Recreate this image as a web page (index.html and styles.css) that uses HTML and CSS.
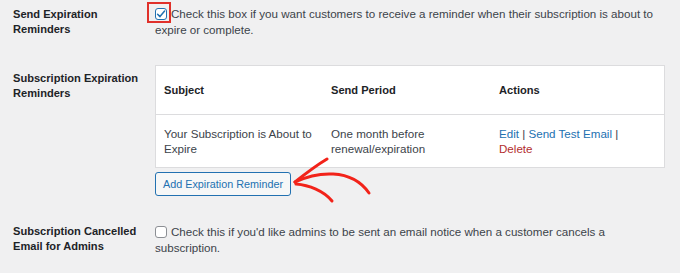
FILE: index.html
```html
<!DOCTYPE html>
<html>
<head>
<meta charset="utf-8">
<link rel="stylesheet" href="styles.css">
</head>
<body>
<div class="form">
  <div class="row row-first">
    <div class="label">Send Expiration Reminders</div>
    <div class="field">
      <label class="check-line">
        <span class="highlight"><span class="cb checked"><svg viewBox="0 0 12 12" width="12" height="12"><path d="M2.6 6.2 L5 8.6 L9.6 3" fill="none" stroke="#2271b1" stroke-width="1.5" stroke-linecap="round" stroke-linejoin="round"/></svg></span></span><span class="after-cb">Check this box if you want customers to receive a reminder when their subscription is about to expire or complete.</span>
      </label>
    </div>
  </div>
  <div class="row row-second">
    <div class="label">Subscription Expiration Reminders</div>
    <div class="field">
      <table class="reminders">
        <thead>
          <tr><th class="c1">Subject</th><th class="c2">Send Period</th><th class="c3">Actions</th></tr>
        </thead>
        <tbody>
          <tr>
            <td class="c1">Your Subscription is About to Expire</td>
            <td class="c2">One month before renewal/expiration</td>
            <td class="c3"><a class="link">Edit</a> | <a class="link">Send Test Email</a> | <a class="link del">Delete</a></td>
          </tr>
        </tbody>
      </table>
      <div class="btn-line">
        <button class="btn">Add Expiration Reminder</button>
        <svg class="arrow" viewBox="0 0 90 50" width="90" height="50">
          <path d="M4 25 C 25 15, 60 10, 78 36" fill="none" stroke="#f2231a" stroke-width="3" stroke-linecap="round"/>
          <path d="M4 25 C 14 17, 26 8, 36 2" fill="none" stroke="#f2231a" stroke-width="3" stroke-linecap="round"/>
          <path d="M5 27 C 18 28, 33 34, 41 44" fill="none" stroke="#f2231a" stroke-width="3" stroke-linecap="round"/>
        </svg>
      </div>
    </div>
  </div>
  <div class="row row-third">
    <div class="label">Subscription Cancelled Email for Admins</div>
    <div class="field">
      <label class="check-line">
        <span class="cb plain"></span><span class="after-cb">Check this if you'd like admins to be sent an email notice when a customer cancels a subscription.</span>
      </label>
    </div>
  </div>
</div>
</body>
</html>
```

FILE: styles.css
```css
html, body {
  margin: 0;
  padding: 0;
  background: #f0f0f1;
}
body {
  width: 680px;
  height: 273px;
  overflow: hidden;
  font-family: "Liberation Sans", Arial, sans-serif;
  font-size: 11.6px;
  line-height: 16px;
  color: #3c434a;
}
.form {
  padding-left: 13px;
}
.row {
  display: grid;
  grid-template-columns: 142px 510px;
}
.row-first { padding-top: 6px; }
.row-second { padding-top: 27px; }
.row-third { padding-top: 28px; }
.label {
  font-weight: bold;
  font-size: 11.1px;
  color: #1d2327;
  line-height: 15px;
  padding-right: 4px;
}
.row-first .label { padding-top: 1px; }
.row-second .label { padding-top: 6px; }
.row-third .label { padding-top: 0; }
.check-line {
  display: block;
  position: relative;
}
.cb {
  display: inline-block;
  width: 12px;
  height: 12px;
  box-sizing: border-box;
  border: 1px solid #8c8f94;
  border-radius: 3px;
  background: #fff;
  vertical-align: -2px;
  margin-right: 4px;
}
.cb svg { display: block; margin: -1px; }
.cb.checked {
  border-color: #2271b1;
  margin-right: 0;
}
.highlight {
  display: inline-block;
  position: relative;
  margin-right: 4px;
}
.highlight::after {
  content: "";
  position: absolute;
  left: -8px;
  top: -4px;
  width: 24px;
  height: 21px;
  box-sizing: border-box;
  border: 2px solid #e0302a;
}
.reminders {
  width: 510px;
  border-collapse: collapse;
  background: #fff;
  border: 1px solid #dcdcde;
  table-layout: fixed;
}
.reminders th {
  text-align: left;
  font-weight: bold;
  font-size: 11.1px;
  color: #1d2327;
  height: 48px;
  padding: 0 8px;
  border-bottom: 1px solid #dcdcde;
}
.reminders td {
  padding: 11px 8px 11px;
  vertical-align: top;
  line-height: 15px;
}
.reminders td.c3 { padding-right: 40px; }
.reminders .c1 { width: 151px; }
.reminders .c2 { width: 152px; }
.link { color: #2271b1; }
.link.del { color: #b32d2e; }
.btn-line {
  position: relative;
  padding-top: 4px;
}
.btn {
  font-family: inherit;
  font-size: 10.8px;
  color: #2271b1;
  background: #f6f7f7;
  border: 1px solid #2271b1;
  border-radius: 3px;
  height: 24px;
  padding: 0 7px;
  line-height: 22px;
}
.arrow {
  position: absolute;
  left: 136px;
  top: -11px;
}
```
